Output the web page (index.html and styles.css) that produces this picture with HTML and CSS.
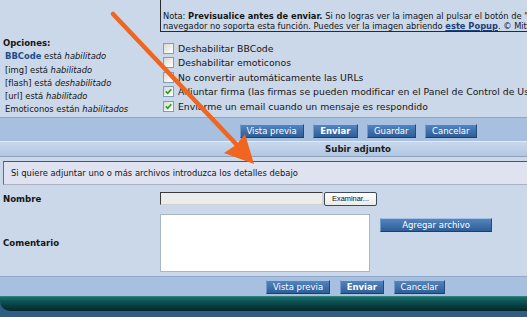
FILE: index.html
```html
<!DOCTYPE html>
<html lang="es">
<head>
<meta charset="utf-8">
<title>Subir adjunto</title>
<link rel="stylesheet" href="styles.css">
</head>
<body>
<div class="page">
  <section class="top">
    <div class="note">
      <p>Nota: <b>Previsualice antes de enviar.</b> Si no logras ver la imagen al pulsar el botón de "Previsualizar" es que tu</p>
      <p>navegador no soporta esta función. Puedes ver la imagen abriendo <a href="#">este Popup</a>. © Mitch</p>
    </div>
    <div class="options-info">
      <div class="opt-title">Opciones:</div>
      <div class="opt-line"><a class="bb" href="#">BBCode</a> está <i>habilitado</i></div>
      <div class="opt-line">[img] está <i>habilitado</i></div>
      <div class="opt-line">[flash] está <i>deshabilitado</i></div>
      <div class="opt-line">[url] está <i>habilitado</i></div>
      <div class="opt-line">Emoticonos están <i>habilitados</i></div>
    </div>
    <div class="checks">
      <label class="check"><span class="box"></span>Deshabilitar BBCode</label>
      <label class="check"><span class="box"></span>Deshabilitar emoticonos</label>
      <label class="check"><span class="box"></span>No convertir automáticamente las URLs</label>
      <label class="check"><span class="box"><svg viewBox="0 0 9 9" width="9" height="9"><path d="M1.8 4.3 L3.7 6.3 L7.3 2.2" fill="none" stroke="#22a322" stroke-width="1.7"/></svg></span>Adjuntar firma (las firmas se pueden modificar en el Panel de Control de Usuario)</label>
      <label class="check"><span class="box"><svg viewBox="0 0 9 9" width="9" height="9"><path d="M1.8 4.3 L3.7 6.3 L7.3 2.2" fill="none" stroke="#22a322" stroke-width="1.7"/></svg></span>Enviarme un email cuando un mensaje es respondido</label>
    </div>
  </section>

  <div class="bar bar-top">
    <button type="button" class="btn w-prev">Vista previa</button>
    <button type="button" class="btn btn-main w-send">Enviar</button>
    <button type="button" class="btn w-save">Guardar</button>
    <button type="button" class="btn w-cancel">Cancelar</button>
  </div>

  <div class="head">Subir adjunto</div>

  <div class="info">Si quiere adjuntar uno o más archivos introduzca los detalles debajo</div>

  <div class="row row-name">
    <div class="label">Nombre</div>
    <span class="file-field"></span>
    <span class="browse">Examinar...</span>
  </div>

  <div class="row row-comment">
    <div class="label">Comentario</div>
    <textarea class="comment" aria-label="Comentario"></textarea>
    <button type="button" class="btn add">Agregar archivo</button>
  </div>

  <div class="bar bar-bottom">
    <button type="button" class="btn w-prev">Vista previa</button>
    <button type="button" class="btn btn-main w-send">Enviar</button>
    <button type="button" class="btn w-cancel">Cancelar</button>
  </div>

  <div class="footer"><div class="teal"></div></div>
</div>

<svg class="arrow" viewBox="0 0 527 317" width="527" height="317" aria-hidden="true">
  <line x1="113" y1="14" x2="237" y2="145" stroke="#f0651f" stroke-width="4.5" stroke-linecap="round"/>
  <polygon points="254,164 224,153 236,145 245,134" fill="#f0651f"/>
</svg>
</body>
</html>
```

FILE: styles.css
```css
html, body {
  margin: 0;
  padding: 0;
  overflow: hidden;
}

body {
  width: 527px;
  height: 317px;
  position: relative;
  background: #cbd8ea;
  font-family: "DejaVu Sans", Verdana, sans-serif;
  color: #151515;
}

.page {
  width: 716px;
}

/* top section */
.top {
  display: grid;
  grid-template-columns: 160px 1fr;
}

.note {
  grid-column: 2;
  grid-row: 1;
  height: 19px;
  padding: 12px 0 0 2px;
  border-left: 1px solid #2a2a2a;
  border-bottom: 1px solid #2a2a2a;
  font-size: 8.3px;
  line-height: 9.5px;
  white-space: nowrap;
  overflow: hidden;
}

.note p {
  margin: 0;
}

.note a {
  color: #1b3f78;
  font-weight: bold;
  text-decoration: underline;
}

.options-info {
  grid-column: 1;
  grid-row: 2;
  padding: 5px 0 0 3px;
  font-size: 8.4px;
  line-height: 13.3px;
  white-space: nowrap;
}

.opt-title {
  font-weight: bold;
  font-size: 8.5px;
}

.opt-line {
  padding-left: 2px;
}

.bb {
  color: #1d4c8a;
  font-weight: bold;
  text-decoration: none;
}

.checks {
  grid-column: 2;
  grid-row: 2;
  padding: 9px 0 0 3px;
  display: flex;
  flex-direction: column;
}

.check {
  display: flex;
  align-items: center;
  gap: 4px;
  height: 14.5px;
  font-size: 9.3px;
  white-space: nowrap;
}

.box {
  width: 9px;
  height: 9px;
  flex: none;
  display: flex;
  border: 1px solid #7f9db9;
  background: linear-gradient(135deg, #d8d8d0, #f6f6f2 70%, #ffffff);
}

/* button bars */
.bar {
  display: flex;
  justify-content: center;
  gap: 9.5px;
  border-top: 1px solid #8ea6c8;
  background: #a8c0e0;
}

.bar-top {
  padding: 6px 0 3px;
}

.bar-bottom {
  padding: 3.5px 5px 2px 0;
}

.btn {
  box-sizing: border-box;
  height: 14px;
  margin: 0;
  padding: 0;
  font-family: inherit;
  font-size: 8.5px;
  line-height: 12px;
  color: #ffffff;
  border: 1px solid;
  border-color: #a4c0e4 #26497a #1f3f6b #7399c6;
  background: linear-gradient(#5384bd, #2f5e97);
}

.btn-main {
  font-weight: bold;
}

.w-prev { width: 64px; }
.w-send { width: 44.5px; }
.w-save { width: 48.5px; }
.w-cancel { width: 51.5px; }

/* section header */
.head {
  height: 14px;
  border-top: 1px solid #e2eaf5;
  border-bottom: 1px solid #8ea2c0;
  background: linear-gradient(#c8d7ec, #b3c7e2);
  text-align: center;
  font-weight: bold;
  font-size: 8.6px;
  line-height: 14px;
  color: #1a1a1a;
}

.info {
  height: 22px;
  margin: 4px 0 0 3px;
  padding-left: 7px;
  border: 1px solid;
  border-color: #4c5565 #a9b1c0 #a9b1c0 #646d7d;
  background: #dfe2f0;
  font-size: 8.4px;
  line-height: 22px;
}

/* form rows */
.row {
  display: flex;
  align-items: flex-start;
}

.label {
  box-sizing: border-box;
  width: 160px;
  padding-left: 3px;
  align-self: center;
  font-weight: bold;
  font-size: 8.6px;
}

.row-name {
  margin-top: 7px;
  height: 14px;
}

.file-field {
  box-sizing: border-box;
  width: 163px;
  height: 13.5px;
  border: 1px solid;
  border-color: #3a3a3a #d0d0d0 #d0d0d0 #3a3a3a;
  background: #ececec;
}

.browse {
  box-sizing: border-box;
  width: 53px;
  height: 14px;
  margin-left: 1px;
  border: 1px solid #3d4a5c;
  border-radius: 2px;
  background: linear-gradient(#ffffff, #ebebe6);
  font-family: "Liberation Sans", Arial, sans-serif;
  font-size: 7.4px;
  line-height: 12px;
  text-align: center;
  color: #111;
}

.row-comment {
  margin-top: 8px;
}

.comment {
  box-sizing: border-box;
  width: 210px;
  height: 58px;
  margin: 0;
  padding: 0;
  border: 1px solid #a8b6c8;
  background: #ffffff;
  resize: none;
}

.add {
  width: 112px;
  height: 14.5px;
  margin: 4px 0 0 10px;
}

.bar-bottom {
  margin-top: 4px;
}

/* footer */
.footer {
  height: 21px;
  background: #2f5d85;
}

.teal {
  height: 15px;
  border-bottom-left-radius: 10px;
  background: linear-gradient(#3f8f8c 0, #1d6f6c 1px, #0e5556 5px, #073c3e 10px, #032728 100%);
}

/* annotation overlay */
.arrow {
  position: absolute;
  left: 0;
  top: 0;
  pointer-events: none;
}
```
